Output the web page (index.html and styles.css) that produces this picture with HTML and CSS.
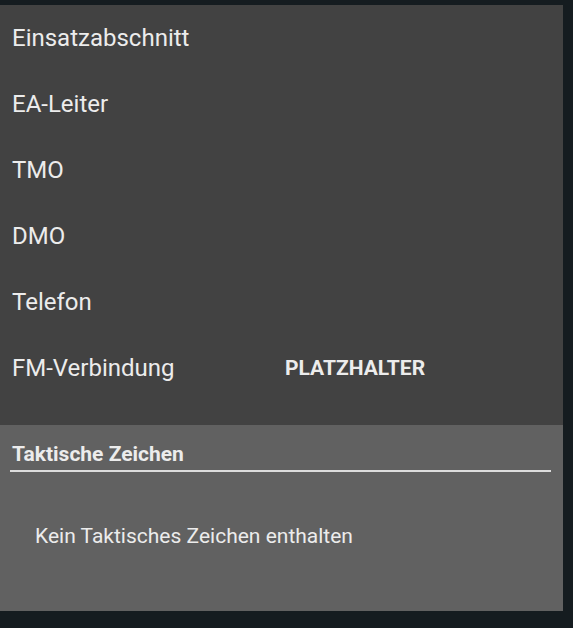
FILE: index.html
```html
<!DOCTYPE html>
<html lang="de">
<head>
<meta charset="utf-8">
<link rel="stylesheet" href="styles.css">
</head>
<body>
<div class="panel">
  <section class="details">
    <div class="row"><span class="label">Einsatzabschnitt</span></div>
    <div class="row"><span class="label">EA-Leiter</span></div>
    <div class="row"><span class="label">TMO</span></div>
    <div class="row"><span class="label">DMO</span></div>
    <div class="row"><span class="label">Telefon</span></div>
    <div class="row"><span class="label">FM-Verbindung</span><span class="value">PLATZHALTER</span></div>
  </section>
  <section class="signs">
    <h2 class="signs-title">Taktische Zeichen</h2>
    <p class="empty">Kein Taktisches Zeichen enthalten</p>
  </section>
</div>
</body>
</html>
```

FILE: styles.css
```css
html, body {
  margin: 0;
  padding: 0;
}
body {
  background: #151c20;
  font-family: Roboto, "Noto Sans", sans-serif;
  color: #ececec;
  padding-top: 5px;
  height: 628px;
  box-sizing: border-box;
}
.panel {
  width: 563px;
}
.details {
  background: #424242;
  padding-bottom: 24px;
}
.row {
  height: 66px;
  display: grid;
  grid-template-columns: 273px 1fr;
  align-items: center;
  padding-left: 12px;
}
.label {
  font-size: 24px;
}
.value {
  font-size: 21px;
  font-weight: 700;
}
.signs {
  background: #616161;
  height: 186px;
  padding: 16px 12px 0 10px;
  box-sizing: border-box;
}
.signs-title {
  margin: 0;
  font-size: 21px;
  font-weight: 700;
  line-height: 26px;
  padding: 0 0 3px 2px;
  border-bottom: 2px solid #dcdcdc;
}
.empty {
  margin: 52px 0 0 25px;
  font-size: 21px;
}
```
